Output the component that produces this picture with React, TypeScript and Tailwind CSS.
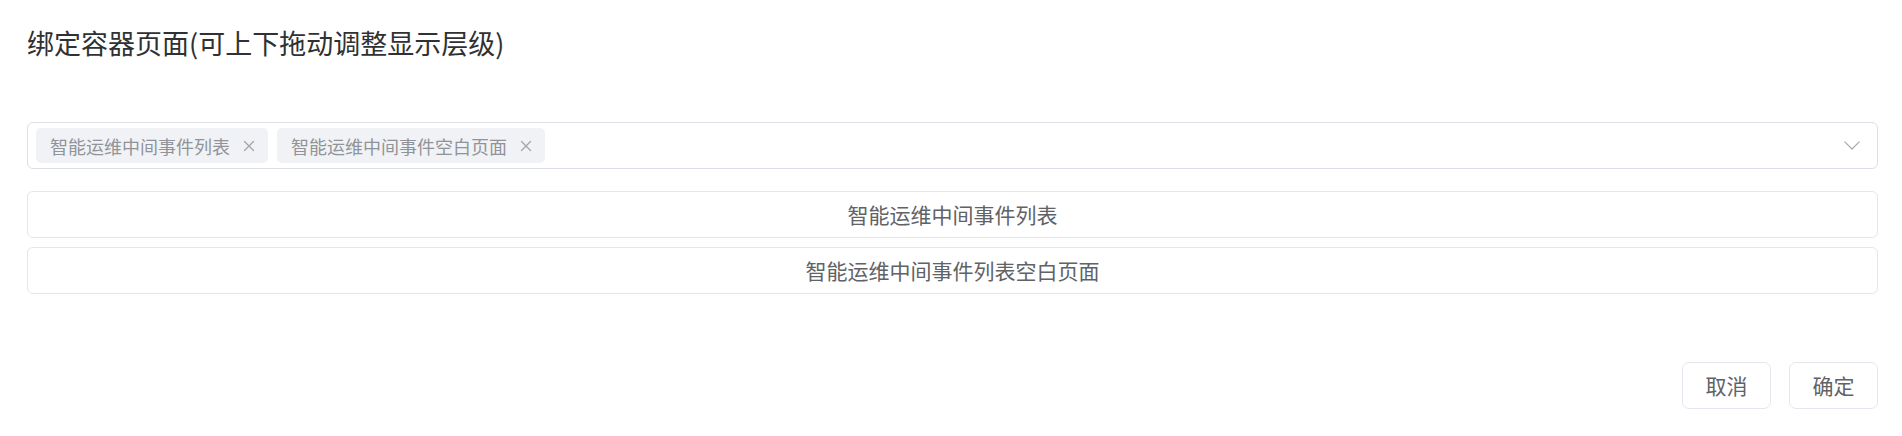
import React from "react";

const font = { fontFamily: '"Noto Sans CJK SC", "Noto Sans", sans-serif' };

function CloseIcon() {
  return (
    <svg width="12" height="12" viewBox="0 0 12 12" fill="none" stroke="#a0a3a8" strokeWidth="1.2" strokeLinecap="round">
      <path d="M1.5 1.5 L10.5 10.5 M10.5 1.5 L1.5 10.5" />
    </svg>
  );
}

function Tag({ label }: { label: string }) {
  return (
    <div className="flex h-[35px] items-center rounded-[5px] bg-[#f0f2f5] pl-[14px] pr-[13px]">
      <span className="text-[18px] leading-[18px] text-[#909399]">{label}</span>
      <span className="ml-[13px] flex items-center">
        <CloseIcon />
      </span>
    </div>
  );
}

export default function App() {
  return (
    <div className="w-[1902px] h-[436px] bg-white pl-[27px] pr-[24px] pt-[30px]" style={font}>
      <div className="text-[27px] leading-[26px] text-[#303133]">绑定容器页面(可上下拖动调整显示层级)</div>

      <div className="mt-[66px] flex h-[47px] items-center rounded-[6px] border border-[#dcdfe6] pl-[8px] pr-[17px]">
        <div className="flex flex-1 items-center gap-[9px]">
          <Tag label="智能运维中间事件列表" />
          <Tag label="智能运维中间事件空白页面" />
        </div>
        <svg width="16" height="9" viewBox="0 0 16 9" fill="none" stroke="#a8abb2" strokeWidth="1.2" strokeLinecap="round" strokeLinejoin="round">
          <path d="M0.8 0.8 L8 8 L15.2 0.8" />
        </svg>
      </div>

      <div className="mt-[22px] flex flex-col gap-[9px]">
        <div className="flex h-[47px] items-center justify-center rounded-[6px] border border-[#e4e7ed] text-[21px] text-[#606266]">
          智能运维中间事件列表
        </div>
        <div className="flex h-[47px] items-center justify-center rounded-[6px] border border-[#e4e7ed] text-[21px] text-[#606266]">
          智能运维中间事件列表空白页面
        </div>
      </div>

      <div className="mt-[68px] flex justify-end gap-[18px]">
        <button className="flex h-[47px] w-[89px] items-center justify-center rounded-[7px] border border-[#e4e7ed] bg-white text-[21px] text-[#606266]">
          取消
        </button>
        <button className="flex h-[47px] w-[89px] items-center justify-center rounded-[7px] border border-[#e4e7ed] bg-white text-[21px] text-[#606266]">
          确定
        </button>
      </div>
    </div>
  );
}
